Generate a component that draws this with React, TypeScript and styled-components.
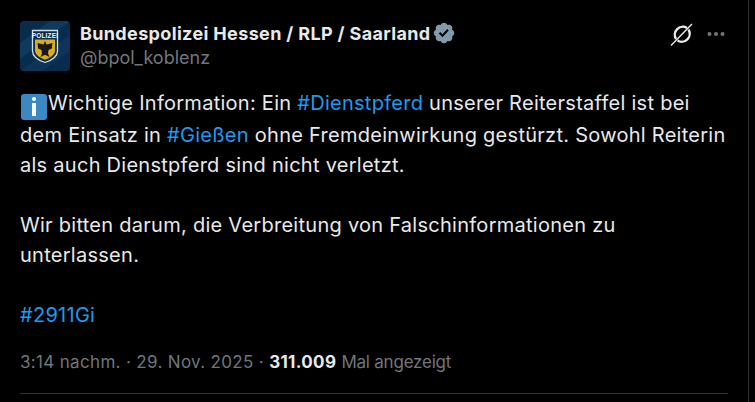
import React from 'react'
import styled, { createGlobalStyle } from 'styled-components'

const GlobalStyle = createGlobalStyle`
  html, body {
    margin: 0;
    background: #000;
  }
`

const Page = styled.div`
  box-sizing: border-box;
  width: 755px;
  height: 402px;
  overflow: hidden;
  background: #000;
  padding-right: 6px;
  font-family: Inter, "Liberation Sans", sans-serif;
`

const Tweet = styled.article`
  box-sizing: border-box;
  height: 402px;
  border-right: 1px solid #2f3336;
  padding: 21px 20px 0;
`

const Header = styled.header`
  display: flex;
  align-items: flex-start;
  gap: 10px;
  height: 50px;
`

const Avatar = styled.div`
  width: 50px;
  height: 50px;
  flex: none;
  border-radius: 4px;
  overflow: hidden;
`

const Names = styled.div`
  flex: 1;
  display: flex;
  flex-direction: column;
  gap: 1px;
`

const NameRow = styled.div`
  display: flex;
  align-items: center;
  gap: 1px;
  height: 24px;
  color: #e7e9ea;
  font-size: 18px;
  font-weight: 700;
  letter-spacing: 0.35px;
`

const Handle = styled.div`
  color: #71767b;
  font-size: 18px;
  line-height: 24px;
`

const Actions = styled.div`
  display: flex;
  align-items: center;
  gap: 13px;
  height: 26px;
  padding-right: 3px;
`

const Body = styled.div`
  margin-top: 17px;
  color: #e7e9ea;
  font-size: 20px;
  line-height: 30px;
  white-space: pre-wrap;
  letter-spacing: 0.27px;
`

const Paragraph = styled.p`
  margin: 0 0 30px;
`

const Tag = styled.span`
  color: #1d9bf0;
`

const InfoEmoji = styled.span`
  display: inline-flex;
  align-items: center;
  justify-content: center;
  width: 26px;
  height: 26px;
  margin-left: 1px;
  margin-right: 1px;
  border-radius: 3px;
  background: #3b88c3;
  vertical-align: -6px;
`

const Meta = styled.div`
  margin-top: 22px;
  color: #71767b;
  font-size: 17px;
  line-height: 20px;
  letter-spacing: 0.33px;
`

const Views = styled.strong`
  color: #e7e9ea;
  font-weight: 700;
`

const ViewsLabel = styled.span`
  letter-spacing: -0.22px;
`

const Divider = styled.div`
  height: 1px;
  margin-top: 21px;
  background: #2f3336;
`

function PoliceAvatar(): React.ReactElement {
  return (
    <svg width="50" height="50" viewBox="0 0 50 50">
      <rect width="50" height="50" fill="#0a2c4c" />
      <path d="M0 22L30 0H50L0 38Z" fill="#0f3a60" />
      <path d="M0 50L50 14V30L22 50Z" fill="#0d3459" />
      <path d="M12.500 9.500H37.500V30C37.500 36 31 39.500 25 41.500C19 39.500 12.500 36 12.500 30Z" fill="#0b2b4b" stroke="#d4dce4" strokeWidth="1.300" />
      <text x="25" y="16.500" textAnchor="middle" fontFamily="Liberation Sans, sans-serif" fontSize="6.500" fontWeight="700" letterSpacing="0.2" fill="#f2f4f6">POLIZEI</text>
      <path d="M15 18.500H35V29.500C35 34 29.500 37 25 38.800C20.500 37 15 34 15 29.500Z" fill="#d9ae1a" />
      <path d="M25 20L26.500 23.500L32.500 22L31.800 27.500L28.500 29L28 32.500L29.500 36L25 33.800L20.500 36L22 32.500L21.500 29L18.200 27.500L17.500 22L23.500 23.500Z" fill="#1a1a12" />
    </svg>
  )
}

function VerifiedBadge(): React.ReactElement {
  return (
    <svg width="24" height="24" viewBox="0 0 22 22">
      <path
        d="M20.396 11c-.018-.646-.215-1.275-.57-1.816-.354-.54-.852-.972-1.438-1.246.223-.607.27-1.264.14-1.897-.131-.634-.437-1.218-.882-1.687-.47-.445-1.053-.75-1.687-.882-.633-.13-1.29-.083-1.897.14-.273-.587-.704-1.086-1.245-1.44S11.647 1.62 11 1.604c-.646.017-1.273.213-1.813.568s-.969.854-1.24 1.44c-.608-.223-1.267-.272-1.902-.14-.635.13-1.22.436-1.69.882-.445.47-.749 1.055-.878 1.688-.13.633-.08 1.29.144 1.896-.587.274-1.087.705-1.443 1.245-.356.54-.555 1.17-.574 1.817.02.647.218 1.276.574 1.817.356.54.856.972 1.443 1.245-.224.606-.274 1.263-.144 1.896.13.634.433 1.218.877 1.688.47.443 1.054.747 1.687.878.633.132 1.29.084 1.897-.136.274.586.705 1.084 1.246 1.439.54.354 1.17.551 1.816.569.647-.016 1.276-.213 1.817-.567s.972-.854 1.245-1.44c.604.239 1.266.296 1.903.164.636-.132 1.22-.447 1.68-.907.46-.46.776-1.044.908-1.681s.075-1.299-.165-1.903c.586-.274 1.084-.705 1.439-1.246.354-.54.551-1.17.569-1.816z"
        fill="#829aab"
      />
      <path d="M9.662 14.850l-3.429-3.428 1.293-1.302 2.072 2.072 4.400-4.794 1.347 1.246z" fill="#000" />
    </svg>
  )
}

function GrokIcon(): React.ReactElement {
  return (
    <svg width="24" height="24" viewBox="0 0 24 24" fill="none" stroke="#e7e9ea">
      <path d="M17 6A8 8 0 0 0 6 17" strokeWidth="2.400" />
      <path d="M7.500 18.500A8 8 0 0 0 18.500 7.500" strokeWidth="2.400" />
      <path d="M1 23.500L22 2" strokeWidth="1.400" />
    </svg>
  )
}

function MoreIcon(): React.ReactElement {
  return (
    <svg width="18" height="20" viewBox="0 0 18 20" fill="#71767b">
      <circle cx="2.500" cy="10" r="2" />
      <circle cx="9" cy="10" r="2" />
      <circle cx="15.500" cy="10" r="2" />
    </svg>
  )
}

export default function App(): React.ReactElement {
  return (
    <Page>
      <GlobalStyle />
      <Tweet>
        <Header>
          <Avatar>
            <PoliceAvatar />
          </Avatar>
          <Names>
            <NameRow>
              Bundespolizei Hessen / RLP / Saarland
              <VerifiedBadge />
            </NameRow>
            <Handle>@bpol_koblenz</Handle>
          </Names>
          <Actions>
            <GrokIcon />
            <MoreIcon />
          </Actions>
        </Header>
        <Body>
          <Paragraph>
            <InfoEmoji>
              <svg width="4" height="19" viewBox="0 0 4 19" fill="#fff">
                <circle cx="2" cy="2" r="2" />
                <rect x="0" y="6" width="4" height="13" rx="0.500" />
              </svg>
            </InfoEmoji>
            Wichtige Information: Ein <Tag>#Dienstpferd</Tag> unserer Reiterstaffel ist bei
            <br />
            dem Einsatz in <Tag>#Gießen</Tag> ohne Fremdeinwirkung gestürzt. Sowohl Reiterin
            <br />
            als auch Dienstpferd sind nicht verletzt.
          </Paragraph>
          <Paragraph>
            Wir bitten darum, die Verbreitung von Falschinformationen zu
            <br />
            unterlassen.
          </Paragraph>
          <Tag>#2911Gi</Tag>
        </Body>
        <Meta>
          3:14 nachm. · 29. Nov. 2025 · <Views>311.009</Views> <ViewsLabel>Mal angezeigt</ViewsLabel>
        </Meta>
        <Divider />
      </Tweet>
    </Page>
  )
}
